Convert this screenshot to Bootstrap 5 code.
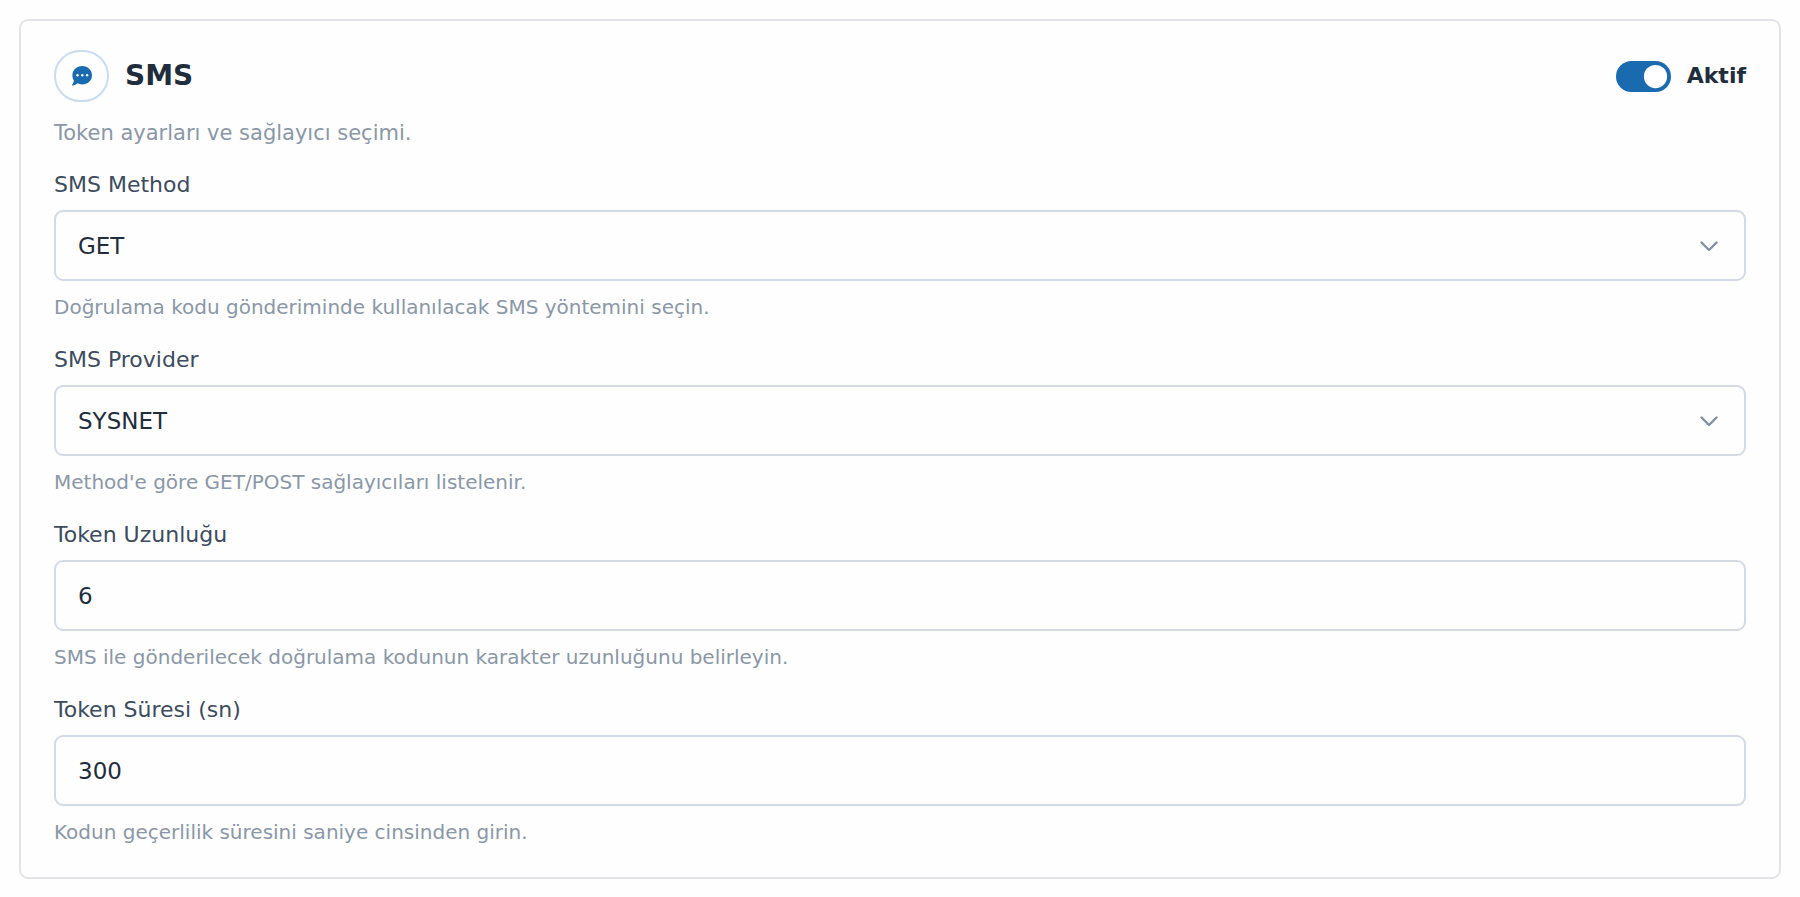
<!DOCTYPE html>
<html lang="tr">
<head>
<meta charset="utf-8">
<meta name="viewport" content="width=device-width, initial-scale=1">
<title>SMS</title>
<link href="https://cdn.jsdelivr.net/npm/bootstrap@5.3.0/dist/css/bootstrap.min.css" rel="stylesheet">
<style>
  body { font-family: "DejaVu Sans", sans-serif; background: #fefefe; color: #1f2d3d; padding: 19px; }
  .sms-card { background: #fefefe; border: 2px solid #e2e4e7; border-radius: 9px; padding: 29px 33px 30px; }
  .sms-icon { width: 55px; height: 52px; border: 2px solid #c9dcf0; border-radius: 26px; color: #1a6ab0; }
  .sms-title { font-size: 28px; line-height: 36px; }
  .sms-note { font-size: 21px; line-height: 30px; color: #8a97a6; }
  .sms-help { font-size: 20px; line-height: 30px; margin-top: 11px; color: #8a97a6; }
  .sms-fields { gap: 23px; margin-top: 22px; }
  .sms-label { font-size: 22px; line-height: 30px; margin-bottom: 10px; color: #3d4b5e; }
  .sms-control, .sms-control:focus { height: 71px; font-size: 23px; line-height: 34px; padding: 0 22px; color: #1f2d3d; background-color: #fefefe; border: 2px solid #d3dae5; border-radius: 9px; }
  .form-select.sms-control { background-image: url("data:image/svg+xml,%3Csvg xmlns='http://www.w3.org/2000/svg' viewBox='0 0 18 12'%3E%3Cpath fill='none' stroke='%238390a2' stroke-width='2.4' stroke-linecap='round' stroke-linejoin='round' d='M1.500 2.500 9 10 16.500 2.500'/%3E%3C/svg%3E"); background-size: 18px 12px; background-position: right 26px center; }
  .sms-switch .form-check-input { width: 55px; height: 31px; margin: 0; border: 0; background-size: 31px 31px; }
  .sms-switch .form-check-input:checked { background-color: #1a6ab0; }
  .sms-state { font-size: 22px; line-height: 30px; }
</style>
</head>
<body>
<main class="sms-card">
  <div class="d-flex align-items-center justify-content-between">
    <div class="d-flex align-items-center gap-3">
      <span class="sms-icon d-flex align-items-center justify-content-center">
        <svg width="20" height="20" viewBox="0 0 20 20" aria-hidden="true">
          <path fill="currentColor" d="M10.200 0C15.700 0 20 4 20 9.200s-4.300 9.200-9.800 9.200c-1.900 0-3.500-.4-5-1.100C3.900 18.700 2.100 19.500.7 19.500c-.7 0-.9-.6-.4-1.100 1-1.200 1.500-2.600 1.500-4C.9 12.900.4 11.200.4 9.200.4 4 4.700 0 10.200 0Z"/>
          <g fill="#fefefe"><circle cx="5.500" cy="9.200" r="1.200"/><circle cx="10.300" cy="9.200" r="1.200"/><circle cx="15.100" cy="9.200" r="1.200"/></g>
        </svg>
      </span>
      <h1 class="sms-title fw-bold mb-0">SMS</h1>
    </div>
    <div class="sms-switch form-switch d-flex align-items-center gap-3 p-0">
      <input class="form-check-input" type="checkbox" role="switch" id="smsActive" checked>
      <label class="sms-state fw-bold" for="smsActive">Aktif</label>
    </div>
  </div>
  <p class="sms-note mt-3 mb-0">Token ayarları ve sağlayıcı seçimi.</p>
  <form class="sms-fields d-flex flex-column">
    <div>
      <label class="sms-label d-block" for="smsMethod">SMS Method</label>
      <select class="form-select sms-control" id="smsMethod"><option selected>GET</option><option>POST</option></select>
      <div class="sms-help">Doğrulama kodu gönderiminde kullanılacak SMS yöntemini seçin.</div>
    </div>
    <div>
      <label class="sms-label d-block" for="smsProvider">SMS Provider</label>
      <select class="form-select sms-control" id="smsProvider"><option selected>SYSNET</option></select>
      <div class="sms-help">Method'e göre GET/POST sağlayıcıları listelenir.</div>
    </div>
    <div>
      <label class="sms-label d-block" for="tokenLength">Token Uzunluğu</label>
      <input class="form-control sms-control" type="text" inputmode="numeric" id="tokenLength" value="6">
      <div class="sms-help">SMS ile gönderilecek doğrulama kodunun karakter uzunluğunu belirleyin.</div>
    </div>
    <div>
      <label class="sms-label d-block" for="tokenTtl">Token Süresi (sn)</label>
      <input class="form-control sms-control" type="text" inputmode="numeric" id="tokenTtl" value="300">
      <div class="sms-help">Kodun geçerlilik süresini saniye cinsinden girin.</div>
    </div>
  </form>
</main>
<script src="https://cdn.jsdelivr.net/npm/bootstrap@5.3.0/dist/js/bootstrap.bundle.min.js"></script>
</body>
</html>
